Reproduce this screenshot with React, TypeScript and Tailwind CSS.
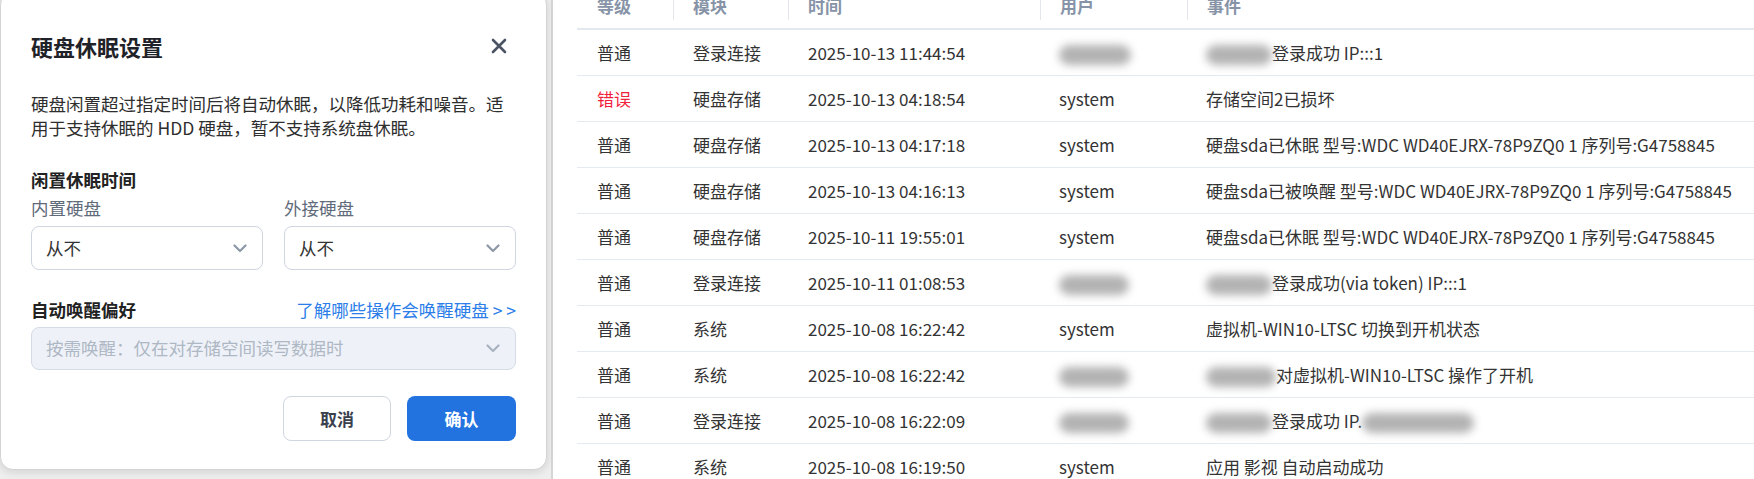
import React from "react";

const Blur = ({ w, h = 20 }: { w: number; h?: number }) => (
  <span
    className="inline-block rounded-full bg-[#b3b3b3] blur-[4px] align-middle"
    style={{ width: w, height: h }}
  />
);

const Chevron = ({ color = "#8d97a8" }: { color?: string }) => (
  <svg width="14" height="9" viewBox="0 0 14 9" fill="none">
    <path d="M1.5 1.5 L7 7 L12.5 1.5" stroke={color} strokeWidth="2.2" strokeLinecap="round" strokeLinejoin="round" />
  </svg>
);

type Row = {
  level: string;
  err?: boolean;
  mod: string;
  time: string;
  user: React.ReactNode;
  event: React.ReactNode;
};

const rows: Row[] = [
  { level: "普通", mod: "登录连接", time: "2025-10-13 11:44:54", user: <Blur w={72} />, event: <><Blur w={66} />登录成功 IP:::1</> },
  { level: "错误", err: true, mod: "硬盘存储", time: "2025-10-13 04:18:54", user: "system", event: "存储空间2已损坏" },
  { level: "普通", mod: "硬盘存储", time: "2025-10-13 04:17:18", user: "system", event: "硬盘sda已休眠 型号:WDC WD40EJRX-78P9ZQ0 1 序列号:G4758845" },
  { level: "普通", mod: "硬盘存储", time: "2025-10-13 04:16:13", user: "system", event: "硬盘sda已被唤醒 型号:WDC WD40EJRX-78P9ZQ0 1 序列号:G4758845" },
  { level: "普通", mod: "硬盘存储", time: "2025-10-11 19:55:01", user: "system", event: "硬盘sda已休眠 型号:WDC WD40EJRX-78P9ZQ0 1 序列号:G4758845" },
  { level: "普通", mod: "登录连接", time: "2025-10-11 01:08:53", user: <Blur w={70} />, event: <><Blur w={66} />登录成功(via token) IP:::1</> },
  { level: "普通", mod: "系统", time: "2025-10-08 16:22:42", user: "system", event: "虚拟机-WIN10-LTSC 切换到开机状态" },
  { level: "普通", mod: "系统", time: "2025-10-08 16:22:42", user: <Blur w={70} />, event: <><Blur w={70} />对虚拟机-WIN10-LTSC 操作了开机</> },
  { level: "普通", mod: "登录连接", time: "2025-10-08 16:22:09", user: <Blur w={70} />, event: <><Blur w={66} />登录成功 IP.<Blur w={112} /></> },
  { level: "普通", mod: "系统", time: "2025-10-08 16:19:50", user: "system", event: "应用 影视 自动启动成功" },
];

const colW = ["w-[96px]", "w-[115px]", "w-[252px]", "w-[147px]", "flex-1"];

export default function App() {
  return (
    <div className="flex h-[479px] w-[1754px] overflow-hidden bg-white font-['Noto_Sans_CJK_SC','Noto_Sans',sans-serif] text-[17px] text-[#333]">
      {/* left overlay area with dialog */}
      <div className="relative w-[553px] shrink-0 border-r-2 border-[#d6d6d6] bg-[#eeeeee]">
        <div className="-mt-[8px] ml-0 flex h-[478px] w-[547px] flex-col rounded-[13px] border border-[#d4d4d4] bg-white px-[30px] pt-[37px] shadow-[0_2px_8px_rgba(0,0,0,0.12)]">
          <div className="flex h-[32px] items-center justify-between">
            <span className="text-[22px] font-bold leading-[32px] text-[#1f2329]">硬盘休眠设置</span>
            <svg width="16" height="16" viewBox="0 0 16 16" className="mr-[9px]">
              <path d="M2 2 L14 14 M14 2 L2 14" stroke="#4a5363" strokeWidth="2.6" strokeLinecap="round" />
            </svg>
          </div>
          <p className="mt-[30px] text-[17.5px] leading-[24px] text-[#2e2e2e]">
            硬盘闲置超过指定时间后将自动休眠，以降低功耗和噪音。适用于支持休眠的 HDD 硬盘，暂不支持系统盘休眠。
          </p>
          <div className="mt-[28px] text-[17.5px] font-bold leading-[24px] text-[#222]">闲置休眠时间</div>
          <div className="mt-[4px] grid grid-cols-2 gap-x-[21px]">
            <div className="flex flex-col">
              <span className="text-[17.5px] leading-[24px] text-[#5f6b7a]">内置硬盘</span>
              <div className="mt-[6px] flex h-[44px] items-center justify-between rounded-[8px] border border-[#cfd6e0] pl-[14px] pr-[15px]">
                <span className="text-[17.5px] text-[#333]">从不</span>
                <Chevron />
              </div>
            </div>
            <div className="flex flex-col">
              <span className="text-[17.5px] leading-[24px] text-[#5f6b7a]">外接硬盘</span>
              <div className="mt-[6px] flex h-[44px] items-center justify-between rounded-[8px] border border-[#cfd6e0] pl-[14px] pr-[15px]">
                <span className="text-[17.5px] text-[#333]">从不</span>
                <Chevron />
              </div>
            </div>
          </div>
          <div className="mt-[28px] flex items-center justify-between leading-[24px]">
            <span className="text-[17.5px] font-bold text-[#222]">自动唤醒偏好</span>
            <span className="text-[17.5px] text-[#2b7de9]">了解哪些操作会唤醒硬盘 &gt; &gt;</span>
          </div>
          <div className="mt-[5px] flex h-[43px] items-center justify-between rounded-[8px] border border-[#d5dce6] bg-[#eef2f8] pl-[14px] pr-[15px]">
            <span className="text-[17.5px] text-[#aeb7c4]">按需唤醒：仅在对存储空间读写数据时</span>
            <Chevron color="#a9b2c0" />
          </div>
          <div className="mt-[26px] flex justify-end gap-[16px]">
            <button className="h-[45px] w-[108px] rounded-[8px] border border-[#cfd6e0] bg-white text-[17px] font-bold text-[#3a404c]">取消</button>
            <button className="h-[45px] w-[109px] rounded-[8px] bg-[#2272e0] text-[17px] font-bold text-white">确认</button>
          </div>
        </div>
      </div>

      {/* table */}
      <div className="flex-1 pl-[24px]">
        <div className="-mt-[16px]">
          <div className="flex h-[46px] items-center border-b-2 border-[#e3e8ef] font-bold text-[#8793a7]">
            {["等级", "模块", "时间", "用户", "事件"].map((h, i) => (
              <div key={h} className={`${colW[i]} relative flex h-full items-center pl-[20px]`}>
                {i > 0 && <span className="absolute left-0 top-[12px] h-[24px] w-px bg-[#e3e6eb]" />}
                {h}
              </div>
            ))}
          </div>
          {rows.map((r, idx) => (
            <div key={idx} className="flex h-[46px] items-center border-b border-[#e5eaf1] whitespace-nowrap">
              <div className={`${colW[0]} pl-[20px] ${r.err ? "text-[#f2213b]" : ""}`}>{r.level}</div>
              <div className={`${colW[1]} pl-[20px]`}>{r.mod}</div>
              <div className={`${colW[2]} pl-[20px]`}>{r.time}</div>
              <div className={`${colW[3]} pl-[19px]`}>{r.user}</div>
              <div className={`${colW[4]} pl-[19px]`}>{r.event}</div>
            </div>
          ))}
        </div>
      </div>
    </div>
  );
}
